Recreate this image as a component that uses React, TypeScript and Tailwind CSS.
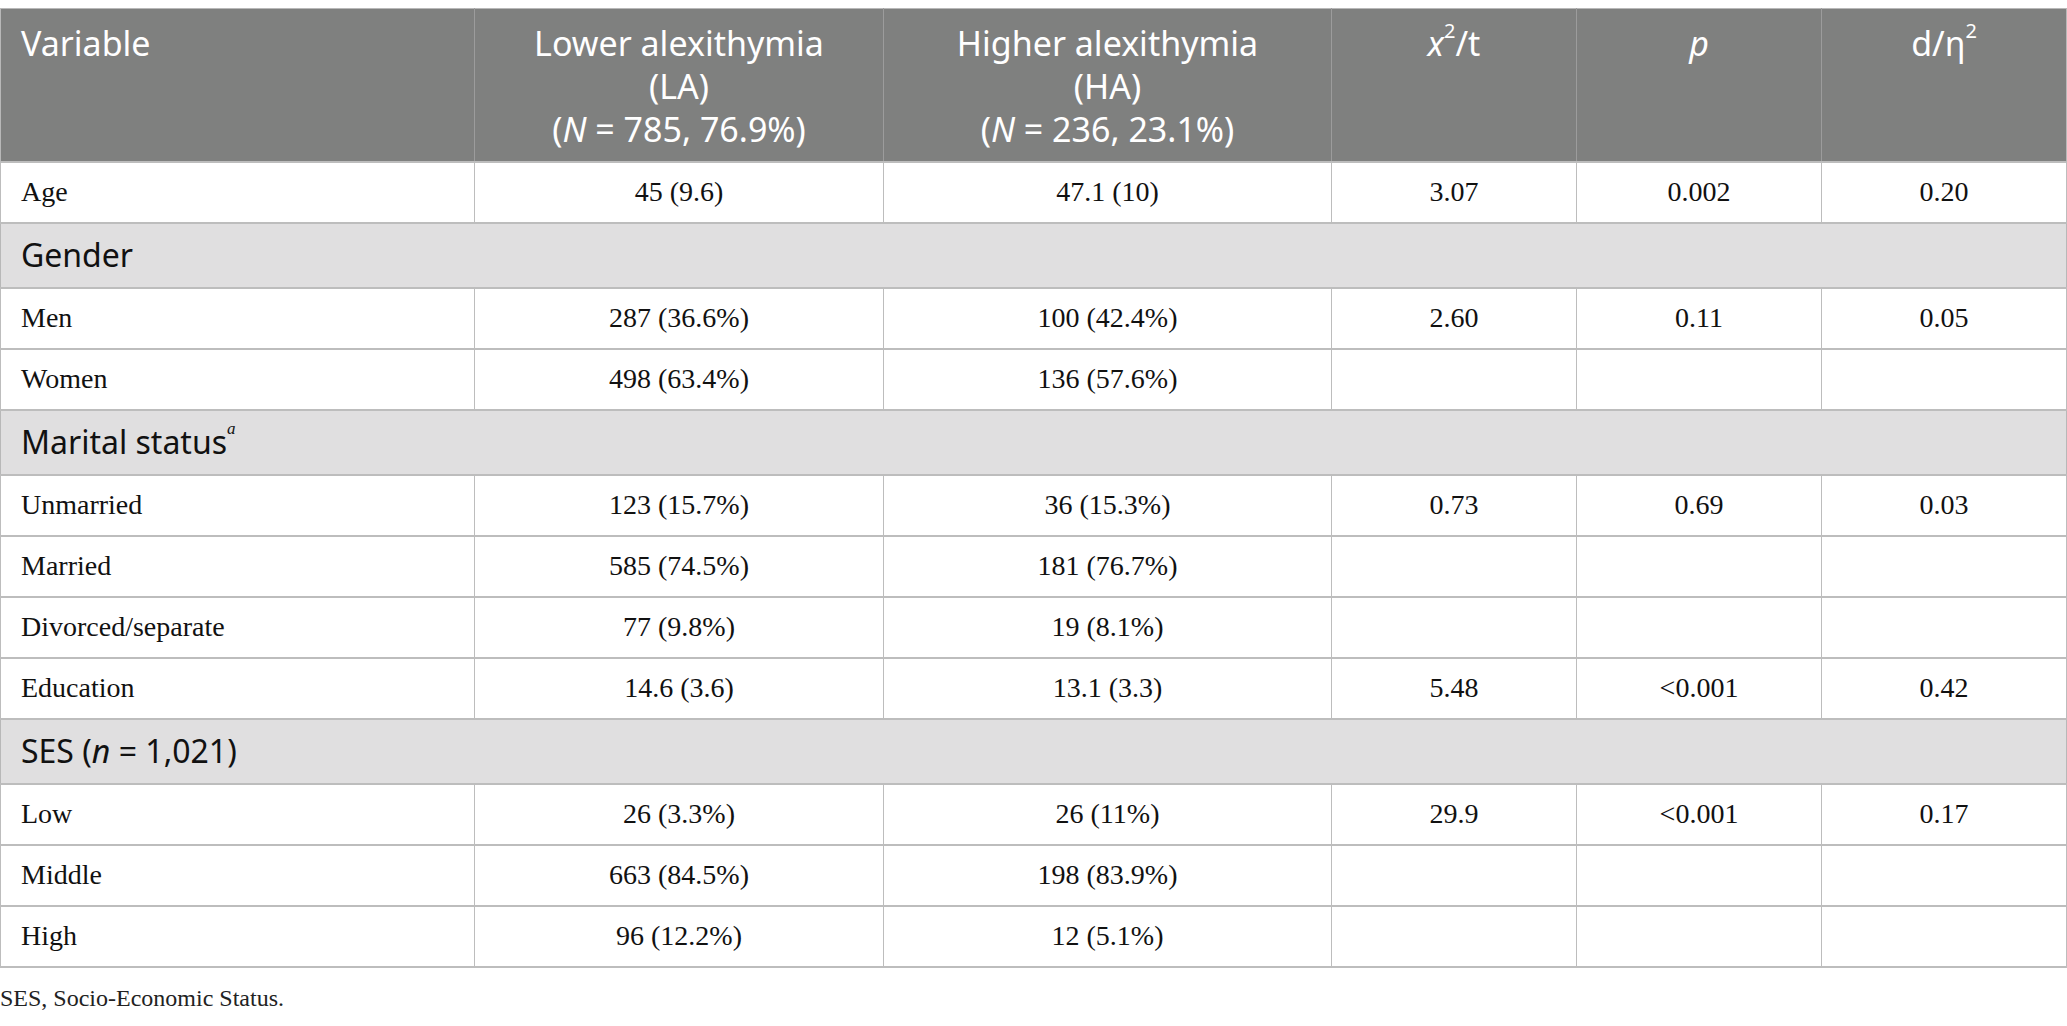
import React from "react";

type Row =
  | { kind: "data"; label: string; la: string; ha: string; stat?: string; p?: string; eff?: string }
  | { kind: "section"; label: React.ReactNode };

const rows: Row[] = [
  { kind: "data", label: "Age", la: "45 (9.6)", ha: "47.1 (10)", stat: "3.07", p: "0.002", eff: "0.20" },
  { kind: "section", label: "Gender" },
  { kind: "data", label: "Men", la: "287 (36.6%)", ha: "100 (42.4%)", stat: "2.60", p: "0.11", eff: "0.05" },
  { kind: "data", label: "Women", la: "498 (63.4%)", ha: "136 (57.6%)" },
  {
    kind: "section",
    label: (
      <>
        Marital status<sup className="italic text-[17px] align-[12px]" style={{ fontFamily: '"Liberation Serif", serif' }}>a</sup>
      </>
    ),
  },
  { kind: "data", label: "Unmarried", la: "123 (15.7%)", ha: "36 (15.3%)", stat: "0.73", p: "0.69", eff: "0.03" },
  { kind: "data", label: "Married", la: "585 (74.5%)", ha: "181 (76.7%)" },
  { kind: "data", label: "Divorced/separate", la: "77 (9.8%)", ha: "19 (8.1%)" },
  { kind: "data", label: "Education", la: "14.6 (3.6)", ha: "13.1 (3.3)", stat: "5.48", p: "<0.001", eff: "0.42" },
  {
    kind: "section",
    label: (
      <>
        SES (<i>n</i> = 1,021)
      </>
    ),
  },
  { kind: "data", label: "Low", la: "26 (3.3%)", ha: "26 (11%)", stat: "29.9", p: "<0.001", eff: "0.17" },
  { kind: "data", label: "Middle", la: "663 (84.5%)", ha: "198 (83.9%)" },
  { kind: "data", label: "High", la: "96 (12.2%)", ha: "12 (5.1%)" },
];

const sans = { fontFamily: '"Noto Sans", "Open Sans", sans-serif' };
const serif = { fontFamily: '"Liberation Serif", "Times New Roman", serif' };

export default function App() {
  return (
    <div className="w-[2067px] bg-white pt-2">
      <table className="w-[2066px] table-fixed border-collapse">
        <colgroup>
          <col className="w-[474px]" />
          <col className="w-[409px]" />
          <col className="w-[448px]" />
          <col className="w-[245px]" />
          <col className="w-[245px]" />
          <col className="w-[245px]" />
        </colgroup>
        <thead>
          <tr className="h-[153px] bg-[#7f807f] text-white align-top text-[34px] leading-[43px]" style={sans}>
            <th className="border border-[#9c9c9c] border-t-[#b8b8b8] border-l-[#b8b8b8] px-5 pt-[13px] text-left font-normal">
              Variable
            </th>
            <th className="border border-[#9c9c9c] border-t-[#b8b8b8] px-2 pt-[13px] text-center font-normal">
              Lower alexithymia
              <br />
              (LA)
              <br />(<i>N</i> = 785, 76.9%)
            </th>
            <th className="border border-[#9c9c9c] border-t-[#b8b8b8] px-2 pt-[13px] text-center font-normal">
              Higher alexithymia
              <br />
              (HA)
              <br />(<i>N</i> = 236, 23.1%)
            </th>
            <th className="border border-[#9c9c9c] border-t-[#b8b8b8] px-4 pt-[13px] text-center font-normal">
              <i>x</i>
              <sup className="text-[20px] align-[8px]">2</sup>/t
            </th>
            <th className="border border-[#9c9c9c] border-t-[#b8b8b8] px-4 pt-[13px] text-center font-normal">
              <i>p</i>
            </th>
            <th className="border border-[#9c9c9c] border-t-[#b8b8b8] border-r-[#b8b8b8] px-4 pt-[13px] text-center font-normal">
              d/η<sup className="text-[20px] align-[8px]">2</sup>
            </th>
          </tr>
        </thead>
        <tbody>
          {rows.map((r, i) =>
            r.kind === "section" ? (
              <tr key={i} className="h-[65px] bg-[#e0dfe0]">
                <td
                  colSpan={6}
                  className="border-2 border-[#bdbdbd] border-x border-x-[#b8b8b8] px-5 text-[32px] text-[#111]"
                  style={sans}
                >
                  {r.label}
                </td>
              </tr>
            ) : (
              <tr key={i} className="h-[61px] text-[28px] text-[#111]" style={serif}>
                <td className="border border-[#bdbdbd] border-y-2 px-5">{r.label}</td>
                <td className="border border-[#bdbdbd] border-y-2 text-center">{r.la}</td>
                <td className="border border-[#bdbdbd] border-y-2 text-center">{r.ha}</td>
                <td className="border border-[#bdbdbd] border-y-2 text-center">{r.stat ?? ""}</td>
                <td className="border border-[#bdbdbd] border-y-2 text-center">{r.p ?? ""}</td>
                <td className="border border-[#bdbdbd] border-y-2 text-center">{r.eff ?? ""}</td>
              </tr>
            )
          )}
        </tbody>
      </table>
      <p className="mt-[12px] text-[24px] text-[#222]" style={serif}>
        SES, Socio-Economic Status.
      </p>
    </div>
  );
}
